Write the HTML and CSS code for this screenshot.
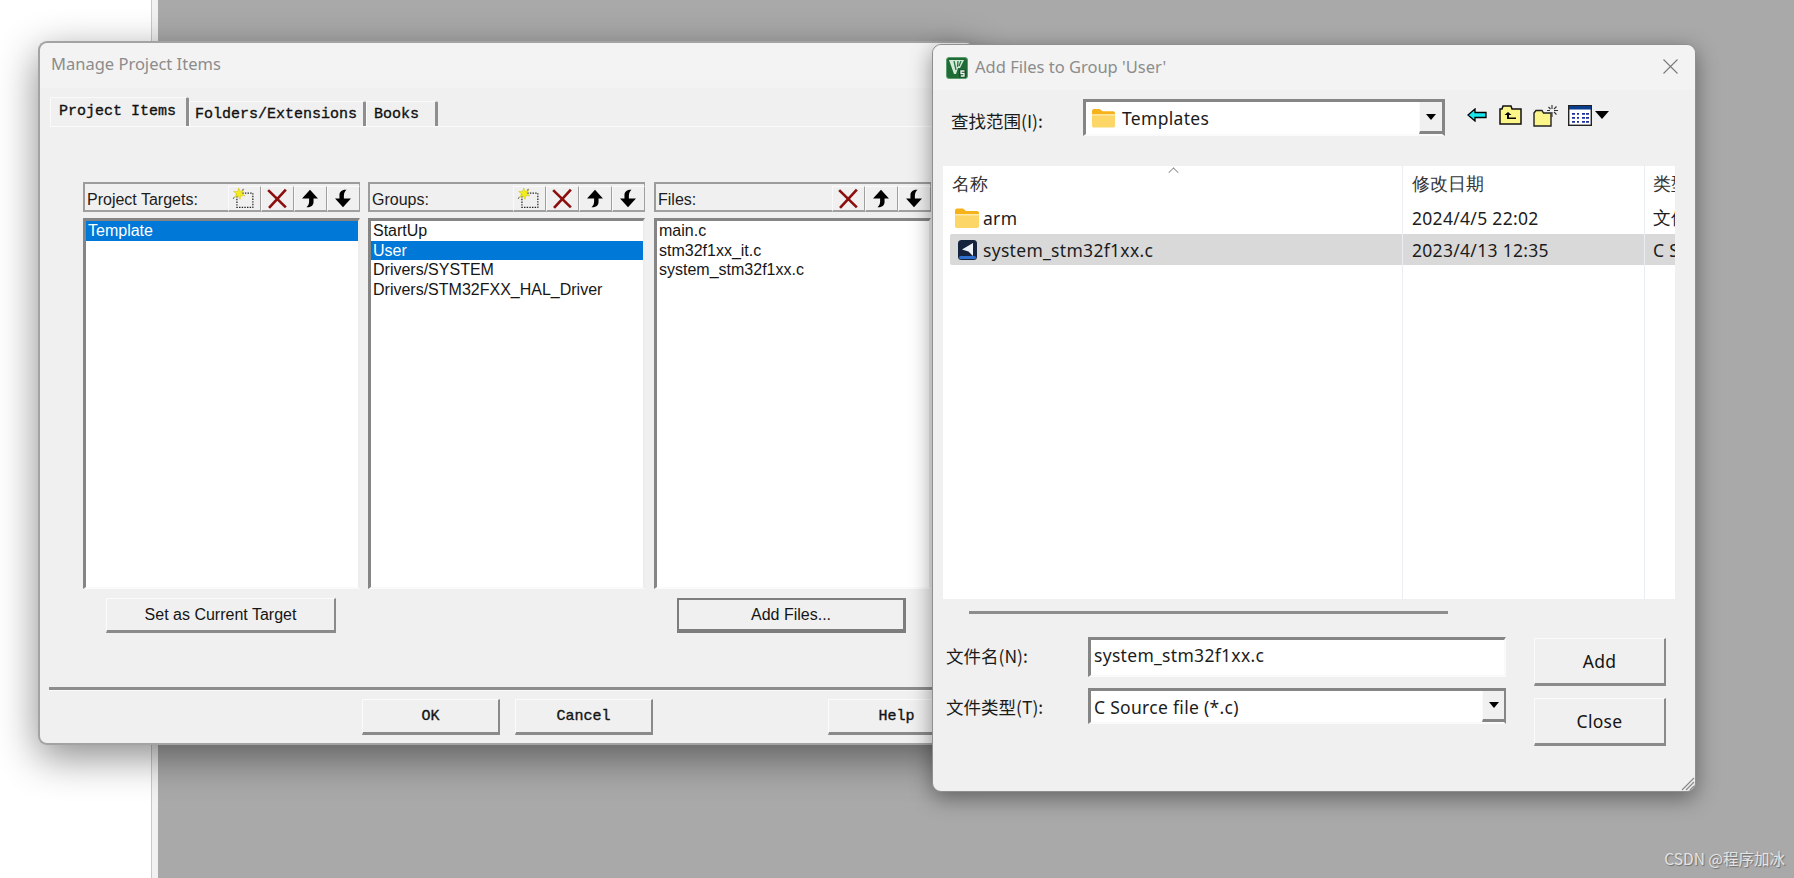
FILE: index.html
```html
<!DOCTYPE html>
<html lang="zh">
<head>
<meta charset="utf-8">
<title>Add Files to Group</title>
<link rel="stylesheet" href="styles.css">
</head>
<body>
<svg class="defs" width="0" height="0" aria-hidden="true">
  <symbol id="i-new" viewBox="0 0 32 26">
    <path d="M8 7H26V23H8Z" fill="none" stroke="#222" stroke-width="1.400" stroke-dasharray="1.600 1.400"/>
    <path d="M10 1l1.600 4 4.400-2-2.500 4 3.500 3-4.500-.3-1 4.300-2.200-4-4.300 1.800 2.700-3.800-3.500-3 4.500 0Z" fill="#f4ec1c" stroke="#c9b800" stroke-width=".5"/>
    <path d="M14 3.500l1.500-1M5 12l-1.500 1" stroke="#222" stroke-width="1"/>
  </symbol>
  <symbol id="i-del" viewBox="0 0 32 26">
    <path d="M6 3.500L26 23M26 3L7 23.500" fill="none" stroke="#8c0f0f" stroke-width="3"/>
  </symbol>
  <symbol id="i-up" viewBox="0 0 32 26">
    <path d="M16 3L25 13H20V17C20 20 18 23 13 23H12C14 21 15 19 15 16V13H7Z" fill="#000"/>
  </symbol>
  <symbol id="i-down" viewBox="0 0 32 26">
    <path d="M19 3H20C18 5 17 7 17 10V13H25L16 23L7 13H12V9C12 6 14 3 19 3Z" fill="#000"/>
  </symbol>
  <symbol id="i-folder" viewBox="0 0 24 20">
    <path d="M0 3C0 1.500 .8 .5 2 .5H8L11 3H22C23.200 3 24 4 24 5V7H0Z" fill="#f5b21a"/>
    <path d="M0 6H24V18C24 19 23.200 20 22 20H2C.8 20 0 19 0 18Z" fill="#fcd768"/>
    <path d="M0 6H24V7.500H0Z" fill="#fde9a8"/>
  </symbol>
</svg>

<main class="desktop">
  <div class="sidebar"></div>
  <div class="backdrop"></div>

  <section class="window project-window">
    <header class="titlebar"><span class="title title-project">Manage Project Items</span></header>
    <nav class="tabs">
      <span class="tab tab-active tab-project">Project Items</span>
      <span class="tab tab-folders">Folders/Extensions</span>
      <span class="tab tab-books">Books</span>
    </nav>
    <div class="panels">
      <div class="panel">
        <div class="panel-head">
          <span class="panel-label">Project Targets:</span>
          <span class="tool"><svg class="tool-icon"><use href="#i-new"/></svg></span>
          <span class="tool"><svg class="tool-icon"><use href="#i-del"/></svg></span>
          <span class="tool"><svg class="tool-icon"><use href="#i-up"/></svg></span>
          <span class="tool"><svg class="tool-icon"><use href="#i-down"/></svg></span>
        </div>
        <ul class="listbox">
          <li class="selected">Template</li>
        </ul>
      </div>
      <div class="panel">
        <div class="panel-head">
          <span class="panel-label">Groups:</span>
          <span class="tool"><svg class="tool-icon"><use href="#i-new"/></svg></span>
          <span class="tool"><svg class="tool-icon"><use href="#i-del"/></svg></span>
          <span class="tool"><svg class="tool-icon"><use href="#i-up"/></svg></span>
          <span class="tool"><svg class="tool-icon"><use href="#i-down"/></svg></span>
        </div>
        <ul class="listbox">
          <li>StartUp</li>
          <li class="selected">User</li>
          <li>Drivers/SYSTEM</li>
          <li>Drivers/STM32FXX_HAL_Driver</li>
        </ul>
      </div>
      <div class="panel panel-files">
        <div class="panel-head">
          <span class="panel-label">Files:</span>
          <span class="tool"><svg class="tool-icon"><use href="#i-del"/></svg></span>
          <span class="tool"><svg class="tool-icon"><use href="#i-up"/></svg></span>
          <span class="tool"><svg class="tool-icon"><use href="#i-down"/></svg></span>
        </div>
        <ul class="listbox">
          <li>main.c</li>
          <li>stm32f1xx_it.c</li>
          <li>system_stm32f1xx.c</li>
        </ul>
      </div>
    </div>
    <div class="panel-actions">
      <button class="btn btn-target">Set as Current Target</button>
      <button class="btn btn-default btn-addfiles">Add Files...</button>
    </div>
    <div class="separator"></div>
    <footer class="footer">
      <button class="btn btn-mono">OK</button>
      <button class="btn btn-mono">Cancel</button>
      <button class="btn btn-mono btn-help">Help</button>
    </footer>
  </section>

  <section class="window file-window">
    <header class="titlebar titlebar-file">
      <svg class="app-icon" viewBox="0 0 22 22" aria-hidden="true">
        <rect x=".5" y=".5" width="21" height="21" rx="2.500" fill="#1f6b35" stroke="#5d9c6c"/>
        <path d="M3 3H18L14 11H12L10 17H8Z" fill="#d7ead9"/>
        <path d="M8 4L10 13M12 4L11.500 10M15 4L13 9" stroke="#2c7a43" stroke-width="1.300" fill="none"/>
        <path d="M13 12.500h7v8h-7Z" fill="#154f2a"/>
        <path d="M18.500 14H15V16.500H18V19H14.800" stroke="#f0f6f0" stroke-width="1.300" fill="none"/>
      </svg>
      <span class="title">Add Files to Group 'User'</span>
      <svg class="close-x" viewBox="0 0 15 15" aria-hidden="true"><path d="M.5.5L14.500 14.500M14.500.5L.5 14.500" stroke="#7a7a7a" stroke-width="1.100" fill="none"/></svg>
    </header>

    <div class="lookin">
      <span class="field-label lookin-label">查找范围(I):</span>
      <div class="combo combo-look">
        <svg class="folder folder-look"><use href="#i-folder"/></svg>
        <span class="combo-text">Templates</span>
        <span class="combo-btn"><i class="caret"></i></span>
      </div>
      <div class="nav-icons">
        <svg class="nav-back" viewBox="0 0 20 14" aria-hidden="true"><path d="M1 7L8 1V4.500H19V9.500H8V13Z" fill="#19e6ee" stroke="#000" stroke-width="1.300"/></svg>
        <svg class="nav-up" viewBox="0 0 23 20" aria-hidden="true"><path d="M1 4H3L4 1H12L13 4H22V19H1Z" fill="#fbf58a" stroke="#111" stroke-width="1.500"/><path d="M9 7L5.500 10H8V14H17V12.500H10V10H12.500Z" fill="#000"/></svg>
        <svg class="nav-new" viewBox="0 0 25 23" aria-hidden="true"><path d="M1 9L3 6.500H9L10.500 9H18V22H1Z" fill="#fbf58a" stroke="#222" stroke-width="1.400"/><path d="M19 1V5M19 8V13M14 6.500H17M21 6.500H25M15.500 3L17.500 5M21 8L23.500 10.500M23.500 2.500L21 5" stroke="#333" stroke-width="1.100" fill="none"/></svg>
        <svg class="nav-view" viewBox="0 0 24 21" aria-hidden="true"><rect x=".7" y=".7" width="22.600" height="19.600" fill="#fff" stroke="#222" stroke-width="1.400"/><rect x="1" y="1" width="22" height="3.500" fill="#0a3d8c"/><path d="M4 8h3v1.800H4ZM9 8h2v1.800H9ZM14 8h3v1.800h-3ZM18 8h3v1.800h-3ZM4 12h3v1.800H4ZM9 12h2v1.800H9ZM14 12h3v1.800h-3ZM18 12h3v1.800h-3ZM4 16h3v1.800H4ZM9 16h2v1.800H9ZM14 16h3v1.800h-3ZM18 16h3v1.800h-3Z" fill="#1d2f9c"/></svg>
        <i class="caret caret-large"></i>
      </div>
    </div>

    <div class="filelist">
      <span class="sort-up"></span>
      <div class="file-row file-head">
        <span class="col col-name">名称</span>
        <span class="col col-date">修改日期</span>
        <span class="col col-type">类型</span>
      </div>
      <div class="file-row file-folder">
        <span class="col col-name col-folder"><svg class="folder folder-row"><use href="#i-folder"/></svg>arm</span>
        <span class="col col-date">2024/4/5 22:02</span>
        <span class="col col-type">文件夹</span>
      </div>
      <div class="file-row file-selected">
        <span class="col col-name">
          <svg class="c-icon" viewBox="0 0 19 20" aria-hidden="true"><rect width="19" height="20" rx="3.500" fill="#16233f"/><rect x="1" y="16" width="17" height="3" rx="1.500" fill="#2f6fd0"/><path d="M15 3V16L10.500 11.500L4 9.500Z" fill="#eef2f8"/></svg>system_stm32f1xx.c
        </span>
        <span class="col col-date">2023/4/13 12:35</span>
        <span class="col col-type">C Source</span>
      </div>
    </div>
    <div class="hscroll"></div>

    <div class="file-form">
      <div class="form-fields">
        <div class="form-row">
          <span class="field-label">文件名(N):</span>
          <div class="combo combo-name"><span class="combo-text">system_stm32f1xx.c</span></div>
        </div>
        <div class="form-row form-row-type">
          <span class="field-label">文件类型(T):</span>
          <div class="combo combo-type">
            <span class="combo-text">C Source file (*.c)</span>
            <span class="combo-btn combo-btn-small"><i class="caret"></i></span>
          </div>
        </div>
      </div>
      <div class="form-actions">
        <button class="btn btn-form">Add</button>
        <button class="btn btn-form">Close</button>
      </div>
    </div>
    <svg class="grip" viewBox="0 0 16 16" aria-hidden="true"><path d="M15 3L3 15M15 7L7 15M15 11L11 15" stroke="#8a8a8a" stroke-width="1.200" fill="none"/></svg>
  </section>

  <span class="watermark">CSDN @程序加冰</span>
</main>
</body>
</html>
```

FILE: styles.css
```css
* { box-sizing: border-box; }
html, body { margin: 0; padding: 0; }
body { width: 1794px; height: 878px; overflow: hidden; background: #a9a9a9; font-family: "Liberation Sans", "Noto Sans CJK SC", sans-serif; }
ul { list-style: none; margin: 0; padding: 0; }
.defs { position: absolute; }

.desktop { position: relative; display: flex; width: 1794px; height: 878px; overflow: hidden; }
.sidebar { width: 158px; background: #fff; box-shadow: inset -6px 0 0 #f1f1f1, inset -7px 0 0 #c9c9c9; }
.backdrop { flex: 1; background: #a9a9a9; }

.window { position: absolute; background: #f0f0f0; border-radius: 9px; display: flex; flex-direction: column; }
.project-window { left: 38px; top: 41px; width: 936px; height: 704px; border: 2px solid #a3a3a3; border-right-width: 0; box-shadow: 0 12px 40px rgba(0,0,0,.46); }
.file-window { left: 932px; top: 44px; width: 764px; height: 748px; box-shadow: 0 6px 22px rgba(0,0,0,.42); border: 1px solid #8f8f8f; }

.titlebar { height: 45px; flex: none; background: #f3f3f3; display: flex; align-items: center; padding-left: 11px; border-radius: 9px 9px 0 0; }
.title { font: 16.500px "Noto Sans", "Open Sans", sans-serif; color: #8c8c8c; position: relative; top: -1px; }
.title-project { top: -2px; }

.tabs { display: flex; align-items: flex-end; height: 29px; margin-top: 9px; margin-left: 10px; flex: none; box-shadow: 0 1px 0 #fbfbfb; width: 884px; }
.tab { font: 15px "Liberation Mono", monospace; -webkit-text-stroke: .35px #111; color: #111; height: 25px; display: flex; align-items: center; border-top: 1px solid #fafafa; border-left: 1px solid #fafafa; border-right: 3px solid #8e8e8e; border-radius: 2px 2px 0 0; }
.tab-active { height: 29px; padding-left: 8px; padding-bottom: 2px; }
.tab-project { width: 139px; }
.tab-folders { width: 177px; padding-left: 5px; }
.tab-books { width: 72px; padding-left: 7px; }

.panels { display: flex; gap: 8px; margin-top: 56px; margin-left: 43px; flex: none; }
.panel { width: 277px; height: 407px; display: flex; flex-direction: column; }
.panel-files { margin-left: 1px; }
.panel-head { height: 30px; flex: none; display: flex; align-items: flex-end; border-top: 2px solid #9c9c9c; border-left: 2px solid #9c9c9c; box-shadow: inset -1px -2px 0 #a0a0a0; padding-left: 2px; }
.panel-label { flex: 1; height: 26px; font-size: 16px; line-height: 28px; color: #1c1c1c; }
.tool { width: 33px; height: 26px; flex: none; background: #f0f0f0; border-top: 1px solid #fafafa; border-left: 1px solid #fafafa; border-right: 1px solid #9f9f9f; border-bottom: 2px solid #a0a0a0; display: flex; align-items: center; justify-content: flex-start; }
.tool-icon { width: 30px; height: 23px; }
.listbox { flex: none; margin-top: 6px; height: 371px; background: #fff; border-top: 3px solid #858585; border-left: 3px solid #858585; border-right: 2px solid #ededed; border-bottom: 2px solid #fafafa; }
.listbox li { height: 19.500px; line-height: 20px; padding-left: 2px; font-size: 16px; color: #161616; white-space: nowrap; }
.listbox li.selected { background: #0078d7; color: #fff; }

.btn { background: #f0f0f0; border-top: 1px solid #fbfbfb; border-left: 1px solid #fbfbfb; border-right: 2px solid #8a8a8a; border-bottom: 3px solid #8a8a8a; color: #151515; padding: 0; margin: 0; border-radius: 0; }
.panel-actions { display: flex; margin-top: 9px; margin-left: 66px; flex: none; }
.btn-target, .btn-addfiles { height: 35px; font: 16px "Liberation Sans", sans-serif; }
.btn-target { width: 230px; }
.btn-addfiles { width: 229px; margin-left: 341px; }
.btn-default { border: 2px solid #7d7d7d; border-bottom-width: 4px; border-right-width: 3px; }

.separator { height: 3px; margin-top: 54px; margin-left: 9px; flex: none; background: #8d8d8d; box-shadow: 0 1px 0 #fafafa; }
.footer { display: flex; margin-top: 9px; margin-left: 322px; flex: none; }
.btn-mono { width: 138px; height: 36px; font: 15px "Liberation Mono", monospace; -webkit-text-stroke: .35px #111; }
.btn-mono + .btn-mono { margin-left: 15px; }
.btn-mono.btn-help { margin-left: 175px; }

.titlebar-file { height: 45px; padding-left: 13px; gap: 7px; position: relative; }
.app-icon { width: 22px; height: 22px; flex: none; }
.close-x { position: absolute; right: 17px; top: 14px; width: 15px; height: 15px; }

.lookin { display: flex; align-items: flex-start; margin-top: 9px; padding-left: 18px; height: 37px; flex: none; }
.field-label { font: 17.500px "Noto Sans CJK SC", sans-serif; color: #1a1a1a; white-space: nowrap; }
.lookin-label { width: 132px; line-height: 44px; }
.combo { background: #fff; border-top: 3px solid #858585; border-left: 3px solid #858585; border-right: 2px solid #fafafa; border-bottom: 2px solid #fafafa; display: flex; align-items: center; font: 17.500px "Noto Sans", "Open Sans", sans-serif; letter-spacing: .3px; color: #1c1c1c; }
.combo-look { width: 362px; height: 37px; padding-left: 6px; gap: 7px; position: relative; border-right-color: #858585; border-right-width: 3px; }
.folder-look { width: 23px; height: 20px; flex: none; }
.combo-text { flex: 1; white-space: nowrap; }
.combo-btn { align-self: stretch; width: 23px; flex: none; display: flex; align-items: center; justify-content: center; background: #f0f0f0; border-left: 1px solid #fafafa; border-bottom: 3px solid #858585; }
.caret { display: block; width: 0; height: 0; border-left: 5px solid transparent; border-right: 5px solid transparent; border-top: 6px solid #000; }
.caret-large { border-left-width: 7px; border-right-width: 7px; border-top-width: 8px; margin-left: 3px; }

.nav-icons { display: flex; align-items: center; margin-left: 22px; height: 22px; margin-top: 5px; }
.nav-back { width: 20px; height: 14px; }
.nav-up { width: 23px; height: 20px; margin-left: 12px; }
.nav-new { width: 25px; height: 23px; margin-left: 11px; }
.nav-view { width: 24px; height: 21px; margin-left: 10px; }

.filelist { position: relative; flex: none; width: 732px; height: 433px; margin-top: 30px; margin-left: 10px; background: #fff; overflow: hidden; }
.sort-up { position: absolute; left: 226px; top: 2px; width: 9px; height: 9px; border-top: 1.500px solid #777; border-left: 1.500px solid #777; transform: rotate(45deg) scale(.8); }
.file-row { display: grid; grid-template-columns: 459px 242px 31px; height: 31px; align-items: center; font: 17.500px "Noto Sans", "Open Sans", sans-serif; letter-spacing: .3px; color: #1c1c1c; }
.file-head { height: 37px; color: #333; letter-spacing: 0; padding-bottom: 2px; }
.file-folder { padding-bottom: 2px; }
.file-selected { background: #d9d9d9; margin-left: 7px; grid-template-columns: 452px 242px 31px; border-radius: 2px 0 0 2px; }
.col { white-space: nowrap; overflow: hidden; display: flex; align-items: center; height: 100%; }
.col-name { padding-left: 9px; }
.col-folder { padding-left: 12px; }
.file-selected .col-name { padding-left: 8px; }
.col-date { padding-left: 10px; }
.col-type { padding-left: 9px; }
.filelist::before, .filelist::after { content: ""; position: absolute; top: 0; bottom: 0; width: 1px; background: #e9eef4; z-index: 1; }
.filelist::before { left: 459px; }
.filelist::after { left: 701px; }
.folder-row { width: 24px; height: 20px; margin-right: 4px; flex: none; }
.c-icon { width: 19px; height: 20px; margin-right: 6px; flex: none; }

.hscroll { flex: none; height: 3px; width: 479px; margin-top: 12px; margin-left: 36px; background: #8d8d8d; }

.file-form { display: flex; flex: none; margin-top: 23px; padding-left: 13px; }
.form-fields { width: 560px; }
.form-row { display: flex; align-items: flex-start; height: 40px; }
.form-row .field-label { width: 142px; line-height: 38px; }
.form-row-type { margin-top: 11px; height: 36px; }
.combo-name { width: 418px; height: 40px; padding-left: 3px; padding-bottom: 6px; }
.combo-type { width: 418px; height: 36px; padding-left: 3px; border-right: 2px solid #858585; }
.combo-btn-small { width: 22px; }
.form-actions { display: flex; flex-direction: column; gap: 12px; margin-left: 28px; margin-top: 1px; }
.btn-form { width: 132px; height: 48px; font: 17.500px "Noto Sans", "Open Sans", sans-serif; letter-spacing: .3px; }

.grip { position: absolute; right: 0; bottom: 0; width: 16px; height: 16px; }
.watermark { position: absolute; right: 9px; bottom: 9px; font: 15.500px "Noto Sans CJK SC", sans-serif; color: #e4e4e4; text-shadow: 1px 1px 1px #6e6e6e; }
```
